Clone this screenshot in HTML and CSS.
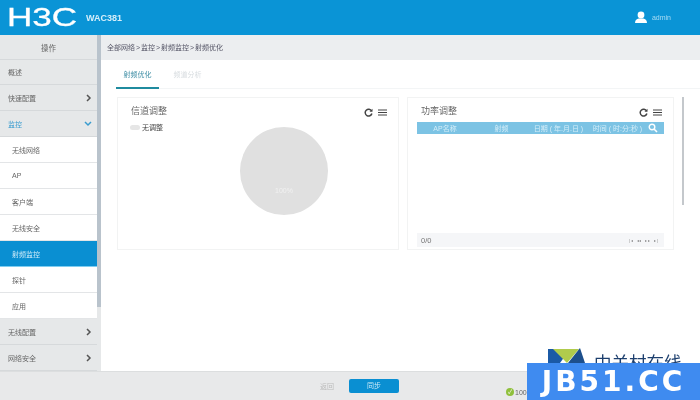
FILE: index.html
```html
<!DOCTYPE html>
<html lang="zh-CN">
<head>
    <meta charset="UTF-8">
    <title>射频优化</title>
    <link rel="stylesheet" href="styles.css">
</head>
<body>
    <div class="page">
        <header class="top">
            <div class="logo">H3C</div>
            <div class="model">WAC381</div>
            <div class="user">
                <svg width="14" height="13" viewBox="0 0 14 13"><circle cx="7" cy="4" r="3.4" fill="#fff"/><path d="M1 12c0-3 2-4.200 3.500-4.500h5C11 7.800 13 9 13 12z" fill="#fff"/></svg>
                <span>admin</span>
            </div>
        </header>

        <div class="middle">
            <nav class="side">
                <div class="side-title">操作</div>
                <div class="side-item">概述</div>
                <div class="side-item">快速配置<svg class="arrow" width="6" height="8" viewBox="0 0 6 8"><path d="M1 1l3 3-3 3" fill="none" stroke="#555" stroke-width="1.500"/></svg></div>
                <div class="side-item open">监控<svg class="arrow" width="8" height="6" viewBox="0 0 8 6"><path d="M1 1l3 3 3-3" fill="none" stroke="#3a9ccf" stroke-width="1.500"/></svg></div>
                <div class="sub-item">无线网络</div>
                <div class="sub-item">AP</div>
                <div class="sub-item">客户端</div>
                <div class="sub-item">无线安全</div>
                <div class="sub-item active">射频监控</div>
                <div class="sub-item">探针</div>
                <div class="sub-item">应用</div>
                <div class="side-item">无线配置<svg class="arrow" width="6" height="8" viewBox="0 0 6 8"><path d="M1 1l3 3-3 3" fill="none" stroke="#555" stroke-width="1.500"/></svg></div>
                <div class="side-item">网络安全<svg class="arrow" width="6" height="8" viewBox="0 0 6 8"><path d="M1 1l3 3-3 3" fill="none" stroke="#555" stroke-width="1.500"/></svg></div>
            </nav>
            <div class="side-scroll"><div class="side-thumb"></div></div>

            <main class="main">
                <div class="crumbs">全部网络 &gt; 监控 &gt; 射频监控 &gt; 射频优化</div>
                <div class="tabs">
                    <div class="tab current">射频优化</div>
                    <div class="tab">频道分析</div>
                </div>
                <div class="body">
                    <div class="cards">
                        <section class="card">
                            <div class="card-head">
                                <h3>信道调整</h3>
                                <div class="tools">
                                    <svg width="9" height="9" viewBox="0 0 9 9"><path d="M7.600 3A3.400 3.400 0 1 0 7.900 5.500" fill="none" stroke="#444" stroke-width="1.500"/><path d="M8.500 .8v3H5.500z" fill="#444"/></svg>
                                    <svg width="9" height="7" viewBox="0 0 9 7"><path d="M0 1h9M0 3.500h9M0 6h9" stroke="#444" stroke-width="1.200"/></svg>
                                </div>
                            </div>
                            <div class="chart">
                                <div class="legend"><i></i>无调整</div>
                                <div class="pie"><span>100%</span></div>
                            </div>
                        </section>
                        <section class="card card-table">
                            <div class="card-head">
                                <h3>功率调整</h3>
                                <div class="tools">
                                    <svg width="9" height="9" viewBox="0 0 9 9"><path d="M7.600 3A3.400 3.400 0 1 0 7.900 5.500" fill="none" stroke="#444" stroke-width="1.500"/><path d="M8.500 .8v3H5.500z" fill="#444"/></svg>
                                    <svg width="9" height="7" viewBox="0 0 9 7"><path d="M0 1h9M0 3.500h9M0 6h9" stroke="#444" stroke-width="1.200"/></svg>
                                </div>
                            </div>
                            <div class="thead">
                                <span>AP名称</span>
                                <span>射频</span>
                                <span>日期 ( 年.月.日 )</span>
                                <span>时间 ( 时:分:秒 )</span>
                                <svg width="10" height="10" viewBox="0 0 10 10"><circle cx="4" cy="4" r="2.800" fill="none" stroke="#fff" stroke-width="1.400"/><path d="M6 6l3 3" stroke="#fff" stroke-width="1.600"/></svg>
                            </div>
                            <div class="tbody"></div>
                            <div class="pager">
                                <span>0/0</span>
                                <span class="pages">|◂ ◂◂ ▸▸ ▸|</span>
                            </div>
                        </section>
                    </div>
                    <div class="main-scroll"></div>
                </div>
            </main>
        </div>

        <footer class="bottom">
            <span class="btn-plain">返回</span>
            <span class="btn-blue">同步</span>
            <div class="status"><i>✓</i>100</div>
        </footer>

        <div class="zol">
            <svg width="37" height="17" viewBox="0 0 37 17"><path d="M0 3h22L12 17H0z" fill="#1b5aa6"/><path d="M5 3h26L19 17z" fill="#b0cb4c"/><path d="M32 2l5 15H20z" fill="#1d4f8c"/></svg>
            <span>中关村在线</span>
        </div>
        <div class="stamp">JB51.CC</div>
    </div>
</body>
</html>
```

FILE: styles.css
```css
* {
    box-sizing: border-box;
}
body {
    margin: 0;
    font-family: "Liberation Sans", "Noto Sans CJK SC", sans-serif;
    font-size: 7px;
    color: #666;
}
.page {
    position: relative;
    width: 700px;
    height: 400px;
    overflow: hidden;
    display: flex;
    flex-direction: column;
    background: #fff;
    filter: blur(.4px);
}

/* top bar */
.top {
    height: 35px;
    flex: none;
    display: flex;
    align-items: center;
    background: #0a94d6;
    color: #fff;
    padding-right: 29px;
}
.logo {
    width: 79px;
    padding-left: 7px;
    font-size: 25px;
    line-height: 39px;
    -webkit-text-stroke: .3px #fff;
    transform: scaleX(1.4);
    transform-origin: 7px 50%;
}
.model {
    font-size: 9px;
    font-weight: bold;
    margin-left: 7px;
    color: #d5eefa;
}
.user {
    margin-left: auto;
    display: flex;
    align-items: center;
    gap: 4px;
    color: #a9dcf4;
}

/* sidebar */
.middle {
    flex: 1;
    display: flex;
    min-height: 0;
}
.side {
    width: 97px;
    flex: none;
    background: #e6e8e9;
}
.side-title, .side-item, .sub-item {
    height: 26px;
    display: flex;
    align-items: center;
    border-bottom: 1px solid #d6d9db;
}
.side-title {
    height: 25px;
    justify-content: center;
    font-size: 7.500px;
}
.side-item {
    padding: 0 5px 0 8px;
    justify-content: space-between;
}
.side-item:nth-child(2) {
    height: 25px;
}
.side-item.open {
    color: #3a9ccf;
}
.sub-item {
    padding-left: 12px;
    background: #fff;
    border-bottom-color: #e3e5e7;
}
.sub-item.active {
    height: 25px;
    background: #0a8fd2;
    color: #cdeaf8;
    border-bottom: 0;
}
.sub-item.active + .sub-item {
    height: 27px;
    border-top: 1px solid #7fcdf0;
}
.side-scroll {
    width: 4px;
    flex: none;
    background: #e6e8e9;
}
.side-thumb {
    height: 272px;
    background: #b9c3cc;
}

/* main */
.main {
    flex: 1;
    min-width: 0;
    display: flex;
    flex-direction: column;
}
.crumbs {
    height: 25px;
    line-height: 25px;
    flex: none;
    padding-left: 6px;
    background: #eceef0;
    color: #556;
    word-spacing: -1px;
}
.tabs {
    height: 29px;
    flex: none;
    display: flex;
    gap: 7px;
    margin-left: 15px;
    border-bottom: 1px solid #f3f5f6;
}
.tab {
    width: 43px;
    text-align: center;
    line-height: 30px;
    color: #d8dde0;
}
.tab.current {
    height: 29px;
    color: #3f8ea5;
    border-bottom: 2px solid #1f8b9f;
}
.body {
    flex: 1;
    display: flex;
    padding: 8px 16px 0 16px;
    min-height: 0;
}
.cards {
    display: flex;
    gap: 8px;
    height: 153px;
}
.card {
    width: 282px;
    border: 1px solid #f2f3f3;
    display: flex;
    flex-direction: column;
    padding: 0 9px;
}
.card-table {
    width: 267px;
    padding-bottom: 1px;
}
.card-head {
    height: 20px;
    flex: none;
    display: flex;
    justify-content: space-between;
    align-items: flex-end;
    padding: 0 2px 0 4px;
}
.card-head h3 {
    margin: 0;
    font-size: 9px;
    font-weight: normal;
    line-height: 13px;
    color: #666;
}
.tools {
    display: flex;
    align-items: center;
    gap: 5px;
    padding-bottom: 1px;
}
.chart {
    display: flex;
    align-items: flex-start;
}
.legend {
    width: 110px;
    display: flex;
    align-items: center;
    gap: 2px;
    margin: 5px 0 0 3px;
    line-height: 9px;
    color: #444;
}
.legend i {
    width: 10px;
    height: 5px;
    border-radius: 3px;
    background: #e6e6e6;
}
.pie {
    width: 88px;
    height: 88px;
    margin-top: 9px;
    border-radius: 50%;
    background: #e0e0e0;
    color: #f1f1f1;
    text-align: center;
    padding-top: 60px;
}
.thead {
    height: 12px;
    flex: none;
    display: grid;
    grid-template-columns: 56px 57px 57px 61px 15px;
    align-items: center;
    text-align: center;
    margin-top: 4px;
    background: #7cc3e4;
    color: #d4edf8;
}
.tbody {
    flex: 1;
}
.pager {
    height: 14px;
    flex: none;
    margin-bottom: 1px;
    display: flex;
    justify-content: space-between;
    align-items: center;
    padding: 0 5px 0 4px;
    background: #f5f6f8;
    color: #777;
    font-size: 7.500px;
}
.pages {
    font-size: 4px;
    color: #888;
    letter-spacing: .9px;
    word-spacing: 1px;
}
.main-scroll {
    width: 2px;
    height: 108px;
    margin-left: 8px;
    background: #c4c8cc;
}

/* bottom bar */
.bottom {
    position: relative;
    height: 29px;
    flex: none;
    display: flex;
    align-items: center;
    padding: 0 0 0 320px;
    gap: 19px;
    background: #e8e9ea;
    border-top: 1px solid #dcdedf;
}
.btn-plain {
    color: #bbb;
    width: 10px;
    white-space: nowrap;
}
.btn-blue {
    width: 50px;
    height: 14px;
    line-height: 14px;
    margin-top: -1px;
    text-align: center;
    border-radius: 2px;
    background: #0a8fd2;
    color: #cdeaf8;
}
.status {
    display: flex;
    align-items: center;
    gap: 1px;
    margin: 12px 0 0 88px;
    color: #666;
}
.status i {
    width: 8px;
    height: 8px;
    border-radius: 50%;
    background: #8fc03c;
    color: #fff;
    font-size: 6px;
    line-height: 8px;
    text-align: center;
    font-style: normal;
}

/* picture marks over the page */
.zol {
    position: absolute;
    left: 548px;
    top: 346px;
    width: 152px;
    height: 17px;
    overflow: hidden;
    display: flex;
    gap: 9px;
    color: #1d3f6e;
    font-size: 17.500px;
    line-height: 34px;
    white-space: nowrap;
}
.stamp {
    position: absolute;
    left: 527px;
    top: 363px;
    width: 173px;
    height: 37px;
    background: #3f8bf0;
    color: #fff;
    font-family: "DejaVu Sans", sans-serif;
    font-size: 28px;
    font-weight: bold;
    line-height: 37px;
    text-align: center;
    letter-spacing: 3px;
}
```
